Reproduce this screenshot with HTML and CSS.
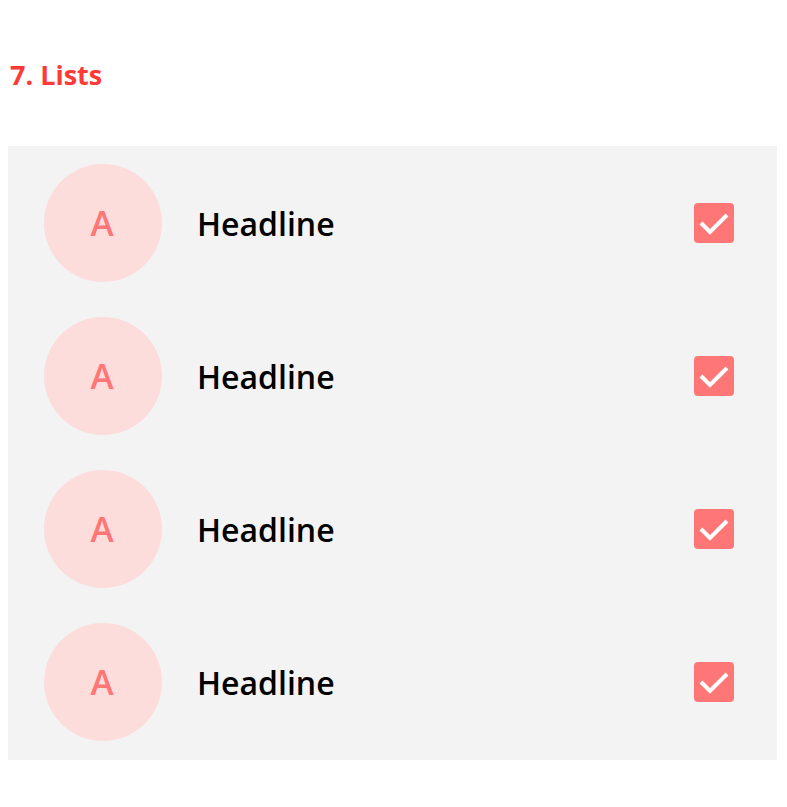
FILE: index.html
```html
<!DOCTYPE html>
<html lang="en">
<head>
    <meta charset="UTF-8">
    <meta name="viewport" content="width=device-width, initial-scale=1.0">
    <title>Lists</title>
    <link rel="stylesheet" href="styles.css">
</head>
<body>
    <h2 class="section-title">7. Lists</h2>

    <ul class="list">
        <li class="list-item">
            <div class="avatar">A</div>
            <span class="headline">Headline</span>
            <span class="checkbox">
                <svg viewBox="0 0 40 40" width="40" height="40"><path d="M7 20 L16 29 L33 12"/></svg>
            </span>
        </li>
        <li class="list-item">
            <div class="avatar">A</div>
            <span class="headline">Headline</span>
            <span class="checkbox">
                <svg viewBox="0 0 40 40" width="40" height="40"><path d="M7 20 L16 29 L33 12"/></svg>
            </span>
        </li>
        <li class="list-item">
            <div class="avatar">A</div>
            <span class="headline">Headline</span>
            <span class="checkbox">
                <svg viewBox="0 0 40 40" width="40" height="40"><path d="M7 20 L16 29 L33 12"/></svg>
            </span>
        </li>
        <li class="list-item">
            <div class="avatar">A</div>
            <span class="headline">Headline</span>
            <span class="checkbox">
                <svg viewBox="0 0 40 40" width="40" height="40"><path d="M7 20 L16 29 L33 12"/></svg>
            </span>
        </li>
    </ul>
</body>
</html>
```

FILE: styles.css
```css
* {
    margin: 0;
    padding: 0;
    box-sizing: border-box;
}

body {
    font-family: 'Open Sans', 'Noto Sans', sans-serif;
    background: #fff;
    margin: 8px;
}

.section-title {
    font-size: 27px;
    font-weight: 700;
    color: #ff3838;
    padding-left: 2px;
    margin-top: 48px;
    margin-bottom: 53px;
}

.list {
    list-style: none;
    background: #f3f3f3;
    width: 769px;
    padding: 18px 43px 19px 36px;
    display: flex;
    flex-direction: column;
    gap: 35px;
}

.list-item {
    display: flex;
    align-items: center;
}

.avatar {
    width: 118px;
    height: 118px;
    border-radius: 50%;
    background: #fddcdc;
    color: #ff7676;
    font-size: 35px;
    font-weight: 600;
    padding-right: 2px;
    padding-bottom: 1px;
    display: flex;
    align-items: center;
    justify-content: center;
    flex-shrink: 0;
}

.headline {
    flex: 1;
    margin-left: 35px;
    font-size: 32px;
    font-weight: 600;
    color: #000;
}

.checkbox {
    width: 40px;
    height: 40px;
    border-radius: 4px;
    background: #ff7676;
    display: block;
}

.checkbox svg {
    display: block;
}

.checkbox path {
    fill: none;
    stroke: #fff;
    stroke-width: 4;
}
```
